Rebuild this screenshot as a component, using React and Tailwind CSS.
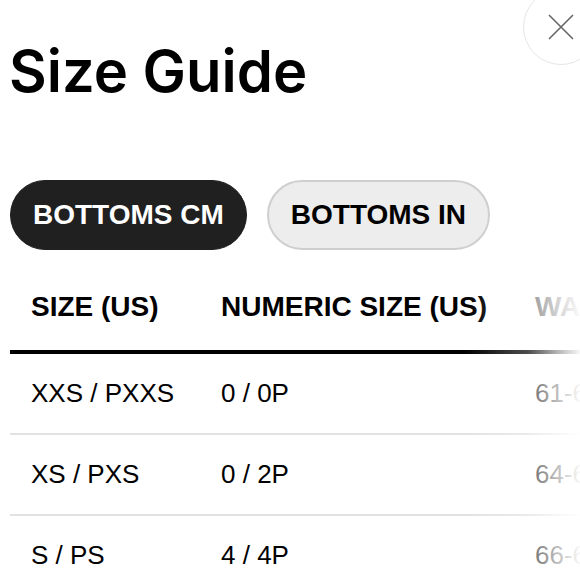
import React from "react";

const rows = [
  { size: "XXS / PXXS", numeric: "0 / 0P", waist: "61-64" },
  { size: "XS / PXS", numeric: "0 / 2P", waist: "64-66" },
  { size: "S / PS", numeric: "4 / 4P", waist: "66-69" },
];

const App = () => {
  return (
    <div className="relative w-[580px] h-[580px] overflow-hidden bg-white text-black font-['Liberation_Sans',Arial,sans-serif]">
      {/* Close button */}
      <button className="absolute left-[523px] top-[-11px] w-[76px] h-[76px] rounded-full border-[1.5px] border-[#e6e6e6] bg-white flex items-center justify-center">
        <svg width="26" height="26" viewBox="0 0 26 26" fill="none">
          <path d="M1 1L25 25M25 1L1 25" stroke="#666" strokeWidth="1.6" />
        </svg>
      </button>

      {/* Title */}
      <h1 className="pt-[42px] pl-[9px] h-[101px] text-[58px] font-semibold leading-none font-['Inter',sans-serif]">
        Size Guide
      </h1>

      {/* Unit tabs */}
      <div className="flex gap-[20px] pl-[10px] mt-[79px]">
        <button className="h-[70px] px-[22px] rounded-full bg-[#202020] border border-[#202020] text-white text-[28px] font-bold leading-none flex items-center">
          BOTTOMS CM
        </button>
        <button className="h-[70px] px-[22px] rounded-full bg-[#ededed] border-2 border-[#cfcfcf] text-black text-[28px] font-bold leading-none flex items-center">
          BOTTOMS IN
        </button>
      </div>

      {/* Table */}
      <div className="relative ml-[10px]">
        <div className="flex items-end h-[104px] pb-[29px] border-b-4 border-black text-[28px] font-bold leading-none whitespace-nowrap">
          <div className="w-[211px] pl-[21px] shrink-0">SIZE (US)</div>
          <div className="w-[314px] shrink-0">NUMERIC SIZE (US)</div>
          <div className="shrink-0 text-[#666]">WAIST (CM)</div>
        </div>
        {rows.map((r, i) => (
          <div
            key={i}
            className="flex items-center h-[81px] pb-[2px] border-b-2 border-[#e2e2e2] text-[26px] leading-none whitespace-nowrap"
          >
            <div className="w-[211px] pl-[21px] shrink-0">{r.size}</div>
            <div className="w-[314px] shrink-0">{r.numeric}</div>
            <div className="shrink-0 text-[#222]">{r.waist}</div>
          </div>
        ))}
      </div>

      {/* Fade-out of the overflowing columns */}
      <div className="absolute right-0 top-[250px] bottom-0 w-[115px] pointer-events-none bg-[linear-gradient(to_right,rgba(255,255,255,0)_0%,rgba(255,255,255,0.3)_55%,rgba(255,255,255,0.7)_80%,rgba(255,255,255,0.97)_100%)]" />
    </div>
  );
};

export default App;
